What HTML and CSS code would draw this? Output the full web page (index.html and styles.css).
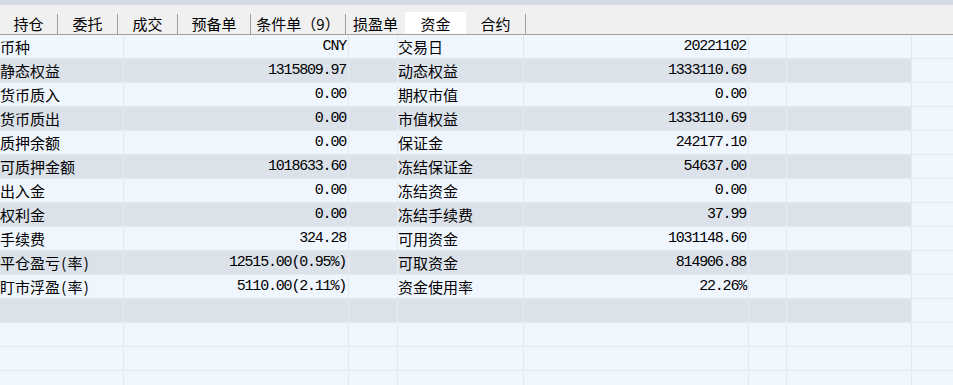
FILE: index.html
```html
<!DOCTYPE html>
<html lang="zh-CN">

<head>
    <meta charset="UTF-8">
    <meta name="viewport" content="width=device-width, initial-scale=1.0">
    <title>资金</title>

    <link rel="stylesheet" href="styles.css">
</head>

<body>
    <div class="topbar"></div>

    <div class="tabs">
        <div class="tab tab-w58">持仓</div>
        <div class="tab tab-w60">委托</div>
        <div class="tab tab-w60">成交</div>
        <div class="tab tab-w73">预备单</div>
        <div class="tab tab-w95">条件单（9）</div>
        <div class="tab tab-w59">损盈单</div>
        <div class="tab tab-active">资金</div>
        <div class="tab tab-w60">合约</div>
    </div>

    <div class="grid">
        <div class="row">
            <div class="cell label">币种</div>
            <div class="cell num">CNY</div>
            <div class="cell"></div>
            <div class="cell label">交易日</div>
            <div class="cell num">20221102</div>
            <div class="cell"></div>
            <div class="cell"></div>
            <div class="cell filler"></div>
        </div>
        <div class="row alt">
            <div class="cell label">静态权益</div>
            <div class="cell num">1315809.97</div>
            <div class="cell"></div>
            <div class="cell label">动态权益</div>
            <div class="cell num">1333110.69</div>
            <div class="cell"></div>
            <div class="cell"></div>
            <div class="cell filler"></div>
        </div>
        <div class="row">
            <div class="cell label">货币质入</div>
            <div class="cell num">0.00</div>
            <div class="cell"></div>
            <div class="cell label">期权市值</div>
            <div class="cell num">0.00</div>
            <div class="cell"></div>
            <div class="cell"></div>
            <div class="cell filler"></div>
        </div>
        <div class="row alt">
            <div class="cell label">货币质出</div>
            <div class="cell num">0.00</div>
            <div class="cell"></div>
            <div class="cell label">市值权益</div>
            <div class="cell num">1333110.69</div>
            <div class="cell"></div>
            <div class="cell"></div>
            <div class="cell filler"></div>
        </div>
        <div class="row">
            <div class="cell label">质押余额</div>
            <div class="cell num">0.00</div>
            <div class="cell"></div>
            <div class="cell label">保证金</div>
            <div class="cell num">242177.10</div>
            <div class="cell"></div>
            <div class="cell"></div>
            <div class="cell filler"></div>
        </div>
        <div class="row alt">
            <div class="cell label">可质押金额</div>
            <div class="cell num">1018633.60</div>
            <div class="cell"></div>
            <div class="cell label">冻结保证金</div>
            <div class="cell num">54637.00</div>
            <div class="cell"></div>
            <div class="cell"></div>
            <div class="cell filler"></div>
        </div>
        <div class="row">
            <div class="cell label">出入金</div>
            <div class="cell num">0.00</div>
            <div class="cell"></div>
            <div class="cell label">冻结资金</div>
            <div class="cell num">0.00</div>
            <div class="cell"></div>
            <div class="cell"></div>
            <div class="cell filler"></div>
        </div>
        <div class="row alt">
            <div class="cell label">权利金</div>
            <div class="cell num">0.00</div>
            <div class="cell"></div>
            <div class="cell label">冻结手续费</div>
            <div class="cell num">37.99</div>
            <div class="cell"></div>
            <div class="cell"></div>
            <div class="cell filler"></div>
        </div>
        <div class="row">
            <div class="cell label">手续费</div>
            <div class="cell num">324.28</div>
            <div class="cell"></div>
            <div class="cell label">可用资金</div>
            <div class="cell num">1031148.60</div>
            <div class="cell"></div>
            <div class="cell"></div>
            <div class="cell filler"></div>
        </div>
        <div class="row alt">
            <div class="cell label">平仓盈亏<span class="paren">(</span>率<span class="paren">)</span></div>
            <div class="cell num">12515.00(0.95%)</div>
            <div class="cell"></div>
            <div class="cell label">可取资金</div>
            <div class="cell num">814906.88</div>
            <div class="cell"></div>
            <div class="cell"></div>
            <div class="cell filler"></div>
        </div>
        <div class="row">
            <div class="cell label">盯市浮盈<span class="paren">(</span>率<span class="paren">)</span></div>
            <div class="cell num">5110.00(2.11%)</div>
            <div class="cell"></div>
            <div class="cell label">资金使用率</div>
            <div class="cell num">22.26%</div>
            <div class="cell"></div>
            <div class="cell"></div>
            <div class="cell filler"></div>
        </div>
        <div class="row alt">
            <div class="cell"></div>
            <div class="cell"></div>
            <div class="cell"></div>
            <div class="cell"></div>
            <div class="cell"></div>
            <div class="cell"></div>
            <div class="cell"></div>
            <div class="cell filler"></div>
        </div>
        <!-- empty area below the data -->
        <div class="row">
            <div class="cell"></div>
            <div class="cell"></div>
            <div class="cell"></div>
            <div class="cell"></div>
            <div class="cell"></div>
            <div class="cell"></div>
            <div class="cell"></div>
            <div class="cell filler"></div>
        </div>
        <div class="row">
            <div class="cell"></div>
            <div class="cell"></div>
            <div class="cell"></div>
            <div class="cell"></div>
            <div class="cell"></div>
            <div class="cell"></div>
            <div class="cell"></div>
            <div class="cell filler"></div>
        </div>
        <div class="row">
            <div class="cell"></div>
            <div class="cell"></div>
            <div class="cell"></div>
            <div class="cell"></div>
            <div class="cell"></div>
            <div class="cell"></div>
            <div class="cell"></div>
            <div class="cell filler"></div>
        </div>
    </div>
</body>

</html>
```

FILE: styles.css
```css
html,
body {
    margin: 0;
    padding: 0;
    height: 100%;
    overflow: hidden;
    background-color: #f0f6fe;
    font-family: "Noto Sans CJK SC", "Liberation Sans", sans-serif;
    font-size: 15px;
    color: #000;
}

.topbar {
    height: 5px;
    background-color: #d6d9e8;
}

.tabs {
    display: flex;
    align-items: flex-end;
    height: 29px;
    background-color: #f0f0f0;
    border-bottom: 1px solid #a0a0a0;
}

.tab {
    box-sizing: border-box;
    height: 20px;
    line-height: 20px;
    text-align: center;
    border-right: 1px solid #a0a0a0;
}

.tab-w58 { width: 58px; }
.tab-w59 { width: 59px; border-right: none; }
.tab-w60 { width: 60px; }
.tab-w73 { width: 73px; }
.tab-w95 { width: 95px; }

.tab-active {
    width: 61px;
    height: 22px;
    line-height: 22px;
    padding-top: 1px;
    background-color: #fff;
    border-right: none;
}

.row {
    display: grid;
    grid-template-columns: 124px 225px 49px 126px 225px 38px 125px 1fr;
    height: 24px;
    background-color: #f0f6fe;
}

.row.alt {
    background-color: #dce2ea;
}

.cell {
    box-sizing: border-box;
    height: 24px;
    line-height: 23px;
    border-right: 1px solid #e5e8ec;
    border-bottom: 1px solid #e5e8ec;
    white-space: nowrap;
    overflow: hidden;
}

.row.alt .cell {
    border-color: #e9edf1;
}

.cell.filler {
    border-right: none;
    background-color: #f0f6fe;
}

.label {
    padding-left: 0;
}

/* half-width brackets are a bit wider in the original font */
.paren {
    display: inline-block;
    width: 7.5px;
    text-align: center;
}

.num {
    text-align: right;
    padding-right: 2px;
    font-family: "Liberation Mono", monospace;
    font-size: 15px;
    letter-spacing: -1.2px;
}
```
